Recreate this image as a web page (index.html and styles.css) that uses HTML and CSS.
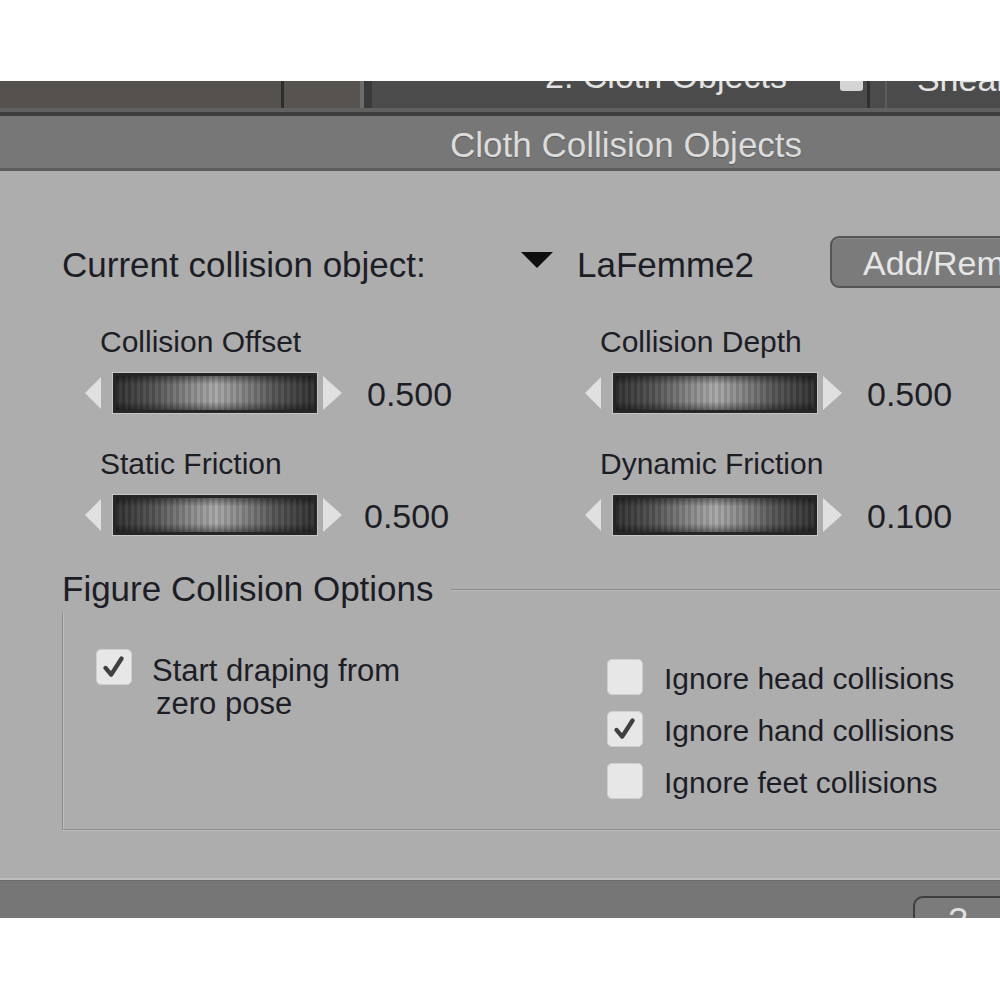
FILE: index.html
```html
<!DOCTYPE html>
<html>
<head>
<meta charset="utf-8">
<link rel="stylesheet" href="styles.css">
</head>
<body>
<div class="shot">
  <div class="tabs">
    <div class="seg seg-a"></div>
    <div class="sep sep-dark"></div>
    <div class="seg seg-b"></div>
    <div class="sep sep-light"></div>
    <div class="sep sep-wide"></div>
    <div class="seg seg-main">
      <span class="tab-text">2. Cloth Objects</span>
      <span class="tab-knob"></span>
      <span class="tab-div"></span>
      <span class="tab-div-light"></span>
      <span class="tab-text tab-next">Shear</span>
    </div>
  </div>
  <div class="header"><span class="header-title">Cloth Collision Objects</span></div>
  <div class="panel">
    <div class="obj-row">
      <span class="obj-label">Current collision object:</span>
      <span class="drop-tri"></span>
      <span class="obj-name">LaFemme2</span>
      <span class="btn">Add/Remove</span>
    </div>
    <div class="sliders">
      <div class="slider-item">
        <div class="slider-label">Collision Offset</div>
        <div class="slider-row"><span class="arr-l"></span><span class="bar"></span><span class="arr-r"></span><span class="val">0.500</span></div>
      </div>
      <div class="slider-item">
        <div class="slider-label">Collision Depth</div>
        <div class="slider-row"><span class="arr-l"></span><span class="bar"></span><span class="arr-r"></span><span class="val">0.500</span></div>
      </div>
      <div class="slider-item">
        <div class="slider-label">Static Friction</div>
        <div class="slider-row"><span class="arr-l"></span><span class="bar"></span><span class="arr-r"></span><span class="val val-tight">0.500</span></div>
      </div>
      <div class="slider-item">
        <div class="slider-label">Dynamic Friction</div>
        <div class="slider-row"><span class="arr-l"></span><span class="bar"></span><span class="arr-r"></span><span class="val">0.100</span></div>
      </div>
    </div>
    <div class="legend-row">
      <span class="legend">Figure Collision Options</span>
      <span class="legend-line"></span>
    </div>
    <div class="group">
      <div class="col-left">
        <div class="check-row">
          <span class="cb"><svg viewBox="0 0 36 36" width="36" height="36"><path d="M9 19 L15 26 L26 9" fill="none" stroke="#404040" stroke-width="4.6" stroke-linecap="round" stroke-linejoin="round"/></svg></span>
          <span class="cb-text">Start draping from<br><span class="indent">zero pose</span></span>
        </div>
      </div>
      <div class="col-right">
        <div class="check-row small">
          <span class="cb"></span>
          <span class="cb-text">Ignore head collisions</span>
        </div>
        <div class="check-row small">
          <span class="cb"><svg viewBox="0 0 36 36" width="36" height="36"><path d="M9 19 L15 26 L26 9" fill="none" stroke="#404040" stroke-width="4.6" stroke-linecap="round" stroke-linejoin="round"/></svg></span>
          <span class="cb-text">Ignore hand collisions</span>
        </div>
        <div class="check-row small">
          <span class="cb"></span>
          <span class="cb-text">Ignore feet collisions</span>
        </div>
      </div>
    </div>
  </div>
  <div class="footer">
    <span class="foot-btn"><span class="foot-glyph">?</span></span>
  </div>
</div>
</body>
</html>
```

FILE: styles.css
```css
html, body {
  margin: 0;
  padding: 0;
  background: #ffffff;
}
body {
  font-family: "Liberation Sans", Arial, sans-serif;
  color: #1d1d26;
}
.shot {
  width: 1000px;
  height: 1000px;
  padding-top: 81px;
  box-sizing: border-box;
  overflow: hidden;
}

/* top tab strip */
.tabs {
  display: flex;
  height: 27px;
  border-bottom: 4px solid #606060;
  overflow: hidden;
}
.seg, .sep { flex: none; }
.seg-a { width: 281px; background: #55524d; }
.sep-dark { width: 3px; background: #2e2e2e; }
.seg-b { width: 76px; background: #57544f; }
.sep-light { width: 4px; background: #6c6c6c; }
.sep-wide { width: 8px; background: #3a3a3a; }
.seg-main {
  flex: 1;
  background: #4b4b4b;
  display: flex;
  align-items: flex-start;
  overflow: hidden;
}
.tab-text {
  flex: none;
  font-size: 34px;
  line-height: 34px;
  color: #e2e2e2;
  margin-top: -22px;
  margin-left: 173px;
  white-space: nowrap;
}
.tab-next { margin-left: 30px; margin-top: -19px; }
.tab-knob {
  flex: none;
  width: 23px;
  height: 10px;
  background: #d4d4d4;
  border-radius: 0 0 3px 3px;
  margin-left: 53px;
}
.tab-div {
  flex: none;
  width: 3px;
  height: 27px;
  background: #2f2f2f;
  margin-left: 4px;
}
.tab-div-light {
  flex: none;
  width: 2px;
  height: 27px;
  background: #5d5d5d;
  margin-left: 15px;
}

/* header */
.header {
  height: 52px;
  box-sizing: content-box;
  background: #777777;
  border-top: 4px solid #3e3e3e;
  border-bottom: 3px solid #5c5c5c;
  display: flex;
  align-items: center;
  padding-left: 450px;
}
.header-title {
  font-size: 35px;
  color: #dcdcdc;
  text-shadow: 0 1px 1px #5a5a5a;
  white-space: nowrap;
  margin-top: 5px;
}

/* panel */
.panel {
  height: 709px;
  box-sizing: border-box;
  background: #adadad;
  padding: 65px 0 0 62px;
  border-bottom: 2px solid #bdbdbd;
  overflow: hidden;
}
.obj-row {
  display: flex;
  align-items: center;
  height: 52px;
  white-space: nowrap;
}
.obj-label {
  flex: none;
  font-size: 35px;
  width: 459px;
  margin-top: 6px;
}
.drop-tri {
  flex: none;
  width: 0;
  height: 0;
  border-left: 16px solid transparent;
  border-right: 16px solid transparent;
  border-top: 16px solid #0e0e0e;
  margin-top: -4px;
  margin-right: 24px;
}
.obj-name {
  flex: none;
  font-size: 35px;
  margin-top: 6px;
}
.btn {
  margin-left: 76px;
  flex: none;
  width: 240px;
  height: 52px;
  box-sizing: border-box;
  border: 2px solid #555555;
  border-radius: 9px;
  background: #7b7b7b;
  color: #e6e6e6;
  font-size: 34px;
  padding-left: 31px;
  padding-top: 3px;
  display: flex;
  align-items: center;
  box-shadow: inset 0 1px 0 #8a8a8a;
}

/* sliders */
.sliders {
  display: grid;
  grid-template-columns: 500px 500px;
  row-gap: 36px;
  margin-left: 23px;
  margin-top: 39px;
}
.slider-item {
  display: flex;
  flex-direction: column;
  gap: 16px;
}
.slider-label {
  font-size: 30px;
  line-height: 30px;
  margin-left: 15px;
  white-space: nowrap;
}
.slider-row {
  display: flex;
  align-items: center;
  height: 40px;
}
.arr-l {
  flex: none;
  width: 0;
  height: 0;
  border-top: 16px solid transparent;
  border-bottom: 16px solid transparent;
  border-right: 16px solid #e0e0e0;
  margin-right: 12px;
}
.arr-r {
  flex: none;
  width: 0;
  height: 0;
  border-top: 17px solid transparent;
  border-bottom: 17px solid transparent;
  border-left: 19px solid #e0e0e0;
  margin-left: 6px;
}
.bar {
  flex: none;
  width: 204px;
  height: 40px;
  box-sizing: border-box;
  border: 3px solid #262626;
  background:
    linear-gradient(180deg, rgba(0,0,0,0.4) 0, rgba(0,0,0,0) 25%, rgba(0,0,0,0) 75%, rgba(0,0,0,0.4) 100%),
    repeating-linear-gradient(90deg, rgba(0,0,0,0.1) 0 3px, rgba(255,255,255,0.04) 3px 6px),
    linear-gradient(90deg, #303030 0%, #555555 20%, #8a8a8a 38%, #a9a9a9 50%, #8a8a8a 62%, #555555 80%, #303030 100%);
  box-shadow: 0 0 0 1px #c6c6c6;
}
.val {
  flex: none;
  font-size: 34px;
  margin-left: 25px;
  margin-top: 2px;
}
.val-tight { margin-left: 22px; }

/* figure collision options */
.legend-row {
  display: flex;
  align-items: center;
  margin-top: 36px;
  height: 35px;
  white-space: nowrap;
}
.legend {
  flex: none;
  font-size: 35px;
  line-height: 35px;
}
.legend-line {
  flex: 1;
  height: 1px;
  background: #8a8a8a;
  border-bottom: 1px solid #bababa;
  margin-left: 17px;
  margin-top: 2px;
}
.group {
  height: 218px;
  box-sizing: border-box;
  border-left: 1px solid #8c8c8c;
  border-bottom: 1px solid #8c8c8c;
  box-shadow: inset 1px 0 0 #bdbdbd, 0 1px 0 #bdbdbd;
  margin-top: 6px;
  padding: 37px 0 0 33px;
  display: flex;
}
.col-left {
  flex: none;
  width: 511px;
}
.col-right {
  display: flex;
  flex-direction: column;
  gap: 15px;
  margin-top: 9px;
}
.check-row {
  display: flex;
  align-items: flex-start;
  gap: 20px;
}
.check-row.small {
  align-items: center;
  gap: 21px;
}
.cb {
  flex: none;
  width: 36px;
  height: 36px;
  box-sizing: border-box;
  background: #e7e7e7;
  border: 1px solid #cfcfcf;
  border-radius: 5px;
  display: flex;
  align-items: center;
  justify-content: center;
  overflow: hidden;
}
.cb svg { display: block; }
.cb-text {
  font-size: 30px;
  line-height: 33px;
  white-space: nowrap;
}
.check-row:not(.small) .cb-text {
  margin-top: 5px;
  font-size: 31px;
}
.indent { padding-left: 4px; }
.check-row.small .cb-text { margin-top: 4px; }

/* footer */
.footer {
  height: 38px;
  background: #767676;
  border-top: 1px solid #6c6c6c;
  display: flex;
  padding-left: 913px;
  padding-top: 15px;
  box-sizing: border-box;
  overflow: hidden;
}
.foot-btn {
  flex: none;
  width: 120px;
  height: 50px;
  box-sizing: border-box;
  border: 2px solid #3e3e3e;
  border-radius: 10px;
  background: #7b7b7b;
  display: flex;
  justify-content: center;
}
.foot-glyph {
  color: #e0e0e0;
  font-size: 34px;
  line-height: 34px;
  margin-top: 4px;
  margin-left: -30px;
}
```
